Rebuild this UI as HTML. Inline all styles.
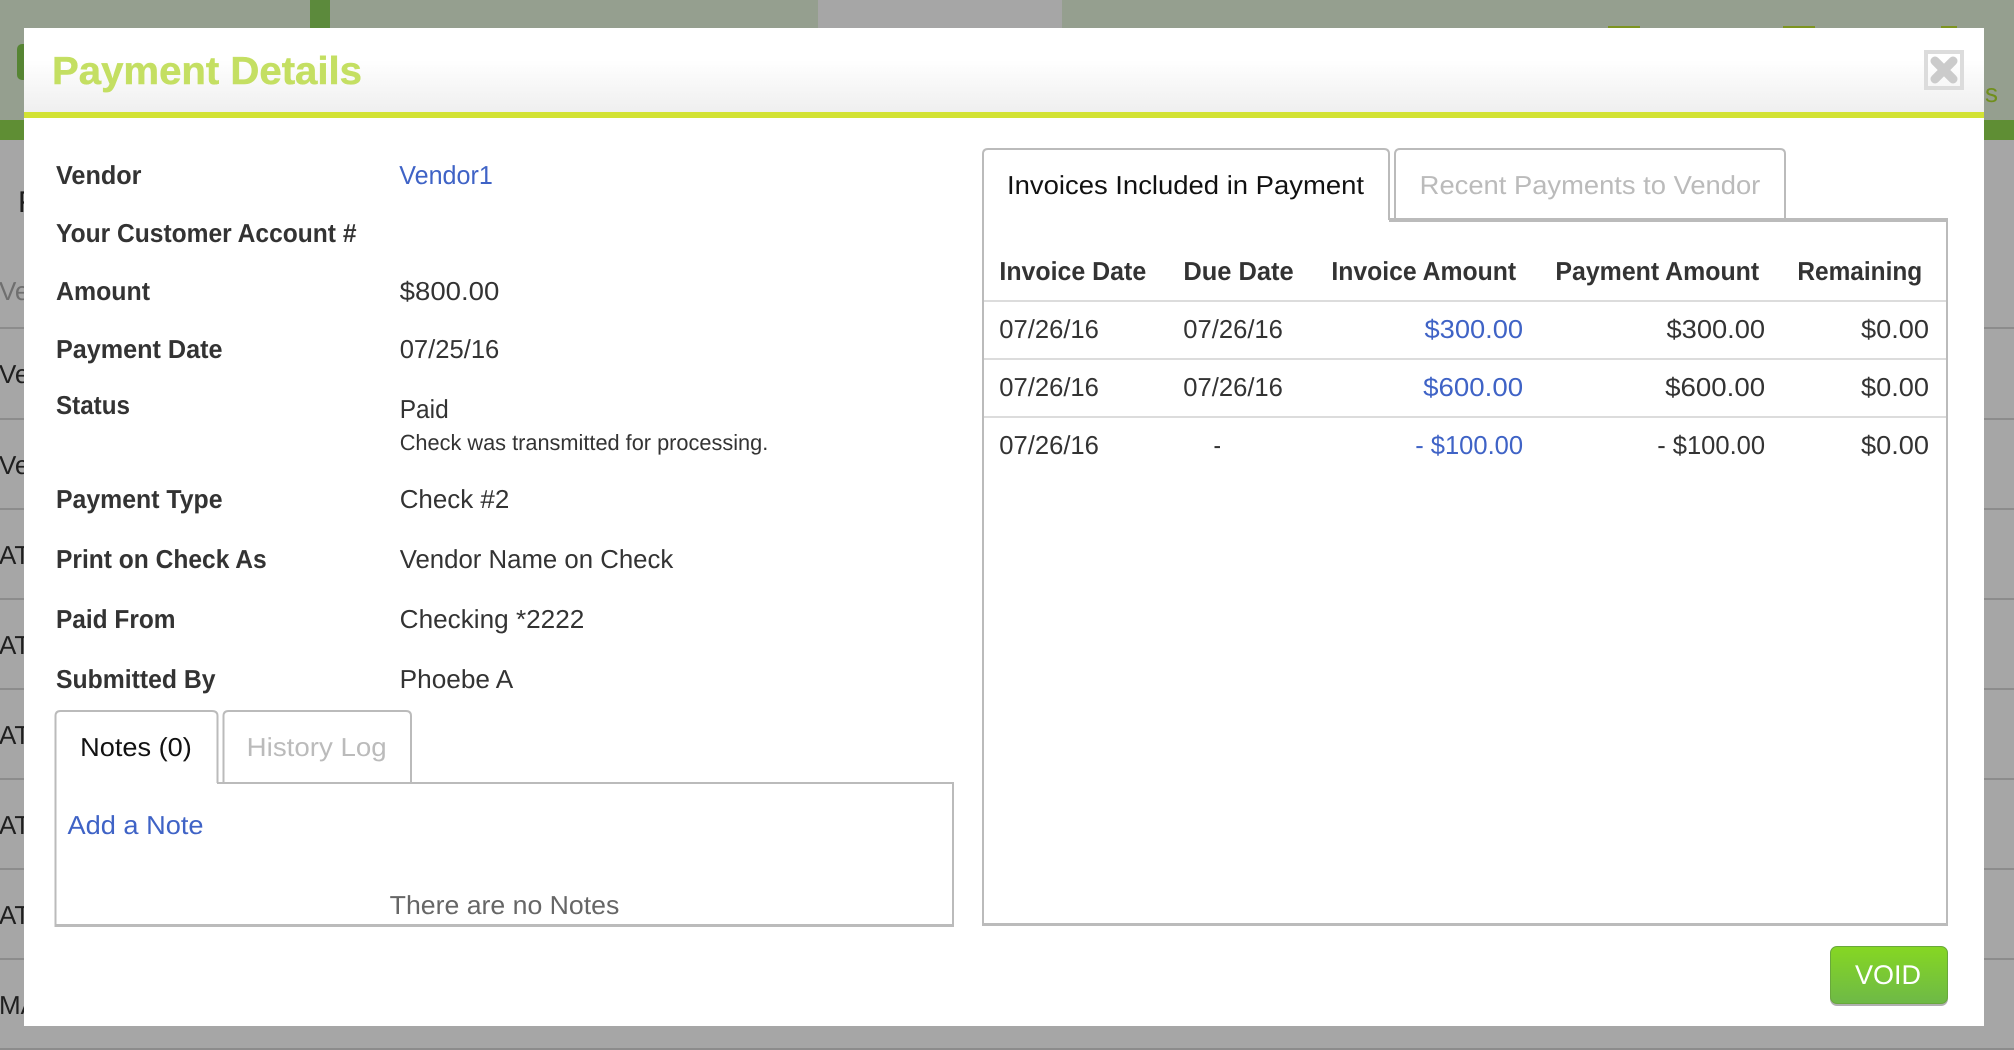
<!DOCTYPE html>
<html lang="en">
<head>
<meta charset="utf-8">
<title>Payment Details</title>
<style>
html,body{margin:0;padding:0;width:2014px;height:1050px;overflow:hidden;background:#a6a6a6}
svg{display:block;position:absolute;left:0;top:0}
text{font-family:"Liberation Sans",Arial,sans-serif;font-size:26px;fill:#333;text-rendering:geometricPrecision}
.b{font-weight:700}
.l{fill:#3f63c6}
.bg{fill:#1f1f1f}
</style>
</head>
<body>
<svg width="2014" height="1050" viewBox="0 0 2014 1050" xmlns="http://www.w3.org/2000/svg">
<defs>
<linearGradient id="hd" x1="0" y1="0" x2="0" y2="1">
<stop offset="0" stop-color="#fff"/><stop offset=".38" stop-color="#fff"/><stop offset="1" stop-color="#efefef"/>
</linearGradient>
<linearGradient id="btn" x1="0" y1="0" x2="0" y2="1">
<stop offset="0" stop-color="#86d722"/><stop offset="1" stop-color="#6eb947"/>
</linearGradient>
</defs>

<!-- page behind the overlay -->
<rect width="2014" height="1050" fill="#a6a6a6"/>
<rect width="2014" height="120" fill="#959f8f"/>
<rect x="818" width="244" height="28" fill="#a6a6a6"/>
<rect x="310" width="20" height="28" fill="#5c8a3c"/>
<rect y="120" width="2014" height="20" fill="#5f8e34"/>
<rect x="17" y="44" width="14" height="36" rx="5" fill="#568533"/>
<rect x="1608" y="26" width="32" height="2" fill="#7d9420"/>
<rect x="1783" y="26" width="32" height="2" fill="#7d9420"/>
<rect x="1941" y="26" width="16" height="2" fill="#7d9420"/>
<g fill="#8c8c8c">
<rect y="327" width="2014" height="2"/><rect y="418" width="2014" height="2"/><rect y="508" width="2014" height="2"/>
<rect y="598" width="2014" height="2"/><rect y="688" width="2014" height="2"/><rect y="778" width="2014" height="2"/>
<rect y="868" width="2014" height="2"/><rect y="958" width="2014" height="2"/><rect y="1048" width="2014" height="2"/>
</g>
<text x="1972" y="102" style="fill:#708f1c">ss</text>
<text x="18" y="212" class="bg" style="font-size:30px">F</text>
<text x="-1" y="300" style="fill:#6f6f6f">Ve</text>
<text x="-1" y="383" class="bg">Ve</text>
<text x="-1" y="474" class="bg">Ve</text>
<text x="-1" y="564" class="bg">AT</text>
<text x="-1" y="654" class="bg">AT</text>
<text x="-1" y="744" class="bg">AT</text>
<text x="-1" y="834" class="bg">AT</text>
<text x="-1" y="924" class="bg">AT</text>
<text x="-1" y="1014" class="bg">MA</text>

<!-- modal -->
<rect x="24" y="28" width="1960" height="998" fill="#fff"/>
<rect x="24" y="28" width="1960" height="84" fill="url(#hd)"/>
<rect x="24" y="112" width="1960" height="6" fill="#d2e233"/>
<text x="52" y="84" class="b" style="font-size:39px;fill:#c4df62;stroke:#c4df62;stroke-width:.5" textLength="310" lengthAdjust="spacingAndGlyphs">Payment Details</text>

<!-- close -->
<rect x="1926" y="52" width="36" height="36" fill="none" stroke="#dcdcdc" stroke-width="4"/>
<path d="M1935 61 L1953 79 M1953 61 L1935 79" stroke="#cbcbcb" stroke-width="9" stroke-linecap="round" fill="none"/>

<!-- details -->
<text x="56" y="184" class="b" textLength="85.500" lengthAdjust="spacingAndGlyphs">Vendor</text>
<text x="399.300" y="184" class="l" textLength="93.500" lengthAdjust="spacingAndGlyphs">Vendor1</text>
<text x="56" y="242" class="b" textLength="300.500" lengthAdjust="spacingAndGlyphs">Your Customer Account #</text>
<text x="56" y="300" class="b" textLength="94" lengthAdjust="spacingAndGlyphs">Amount</text>
<text x="399.700" y="300" textLength="99.600" lengthAdjust="spacingAndGlyphs">$800.00</text>
<text x="56" y="358" class="b" textLength="166.500" lengthAdjust="spacingAndGlyphs">Payment Date</text>
<text x="399.700" y="358" textLength="99.600" lengthAdjust="spacingAndGlyphs">07/25/16</text>
<text x="56" y="414" class="b" textLength="74" lengthAdjust="spacingAndGlyphs">Status</text>
<text x="399.700" y="418" textLength="49" lengthAdjust="spacingAndGlyphs">Paid</text>
<text x="399.700" y="450" style="font-size:22px" textLength="368.600" lengthAdjust="spacingAndGlyphs">Check was transmitted for processing.</text>
<text x="56" y="508" class="b" textLength="166.500" lengthAdjust="spacingAndGlyphs">Payment Type</text>
<text x="399.700" y="508" textLength="109.600" lengthAdjust="spacingAndGlyphs">Check #2</text>
<text x="56" y="568" class="b" textLength="210.700" lengthAdjust="spacingAndGlyphs">Print on Check As</text>
<text x="399.700" y="568" textLength="273.600" lengthAdjust="spacingAndGlyphs">Vendor Name on Check</text>
<text x="56" y="628" class="b" textLength="119.500" lengthAdjust="spacingAndGlyphs">Paid From</text>
<text x="399.700" y="628" textLength="184.600" lengthAdjust="spacingAndGlyphs">Checking *2222</text>
<text x="56" y="688" class="b" textLength="159.500" lengthAdjust="spacingAndGlyphs">Submitted By</text>
<text x="399.700" y="688" textLength="113.600" lengthAdjust="spacingAndGlyphs">Phoebe A</text>

<!-- notes tabs + panel -->
<g fill="none" stroke="#bbb" stroke-width="2">
<path d="M55.500 926 V716 Q55.500 711 60.500 711 H212 Q217.500 711 217.500 716 V783"/>
<path d="M223.500 783 V716 Q223.500 711 228.500 711 H406 Q411 711 411 716 V783"/>
</g>
<rect x="217" y="782" width="737" height="2" fill="#bbb"/>
<rect x="952" y="782" width="2" height="145" fill="#bbb"/>
<rect x="54.500" y="924" width="899.500" height="3" fill="#bbb"/>
<text x="80.200" y="756" style="fill:#111" textLength="111.600" lengthAdjust="spacingAndGlyphs">Notes (0)</text>
<text x="246.700" y="756" style="fill:#bbb" textLength="140" lengthAdjust="spacingAndGlyphs">History Log</text>
<text x="67.500" y="834" class="l" textLength="136" lengthAdjust="spacingAndGlyphs">Add a Note</text>
<text x="389.700" y="914" style="fill:#666" textLength="229.600" lengthAdjust="spacingAndGlyphs">There are no Notes</text>

<!-- invoices tabs + panel -->
<g fill="none" stroke="#bbb" stroke-width="2">
<path d="M983 926 V154 Q983 149 988 149 H1384 Q1389 149 1389 154 V220"/>
<path d="M1395 220 V154 Q1395 149 1400 149 H1780 Q1785 149 1785 154 V220"/>
</g>
<rect x="1389" y="218" width="559" height="4" fill="#bbb"/>
<rect x="1946" y="218" width="2" height="707" fill="#bbb"/>
<rect x="982" y="923" width="966" height="3" fill="#bbb"/>
<text x="1007" y="194" style="fill:#111" textLength="357" lengthAdjust="spacingAndGlyphs">Invoices Included in Payment</text>
<text x="1419.700" y="194" style="fill:#bbb" textLength="340.600" lengthAdjust="spacingAndGlyphs">Recent Payments to Vendor</text>

<!-- table -->
<text x="999.400" y="280" class="b" textLength="146.800" lengthAdjust="spacingAndGlyphs">Invoice Date</text>
<text x="1183.400" y="280" class="b" textLength="110.300" lengthAdjust="spacingAndGlyphs">Due Date</text>
<text x="1331.400" y="280" class="b" textLength="184.800" lengthAdjust="spacingAndGlyphs">Invoice Amount</text>
<text x="1555.400" y="280" class="b" textLength="203.800" lengthAdjust="spacingAndGlyphs">Payment Amount</text>
<text x="1797.400" y="280" class="b" textLength="124.800" lengthAdjust="spacingAndGlyphs">Remaining</text>
<g fill="#dcdcdc">
<rect x="984" y="300" width="962" height="2"/>
<rect x="984" y="358" width="962" height="2"/>
<rect x="984" y="416" width="962" height="2"/>
</g>
<text x="999.300" y="338" textLength="99.600" lengthAdjust="spacingAndGlyphs">07/26/16</text>
<text x="1183.300" y="338" textLength="99.600" lengthAdjust="spacingAndGlyphs">07/26/16</text>
<text x="1424.500" y="338" class="l" textLength="98.600" lengthAdjust="spacingAndGlyphs">$300.00</text>
<text x="1666.500" y="338" textLength="98.600" lengthAdjust="spacingAndGlyphs">$300.00</text>
<text x="1861" y="338" textLength="68" lengthAdjust="spacingAndGlyphs">$0.00</text>
<text x="999.300" y="396" textLength="99.600" lengthAdjust="spacingAndGlyphs">07/26/16</text>
<text x="1183.300" y="396" textLength="99.600" lengthAdjust="spacingAndGlyphs">07/26/16</text>
<text x="1423.200" y="396" class="l" textLength="99.900" lengthAdjust="spacingAndGlyphs">$600.00</text>
<text x="1665.200" y="396" textLength="99.900" lengthAdjust="spacingAndGlyphs">$600.00</text>
<text x="1861" y="396" textLength="68" lengthAdjust="spacingAndGlyphs">$0.00</text>
<text x="999.300" y="454" textLength="99.600" lengthAdjust="spacingAndGlyphs">07/26/16</text>
<text x="1213.500" y="454" textLength="7.500" lengthAdjust="spacingAndGlyphs">-</text>
<text x="1415.200" y="454" class="l" textLength="107.900" lengthAdjust="spacingAndGlyphs">- $100.00</text>
<text x="1657.200" y="454" textLength="107.900" lengthAdjust="spacingAndGlyphs">- $100.00</text>
<text x="1861" y="454" textLength="68" lengthAdjust="spacingAndGlyphs">$0.00</text>

<!-- void button -->
<rect x="1830" y="947" width="118" height="59" rx="7" fill="#b0b0b0"/>
<rect x="1830.500" y="946.500" width="117" height="57" rx="6.500" fill="url(#btn)" stroke="#69a83c"/>
<text x="1855" y="984" style="fill:#fff;font-size:27px" textLength="66" lengthAdjust="spacingAndGlyphs">VOID</text>
</svg>
</body>
</html>
